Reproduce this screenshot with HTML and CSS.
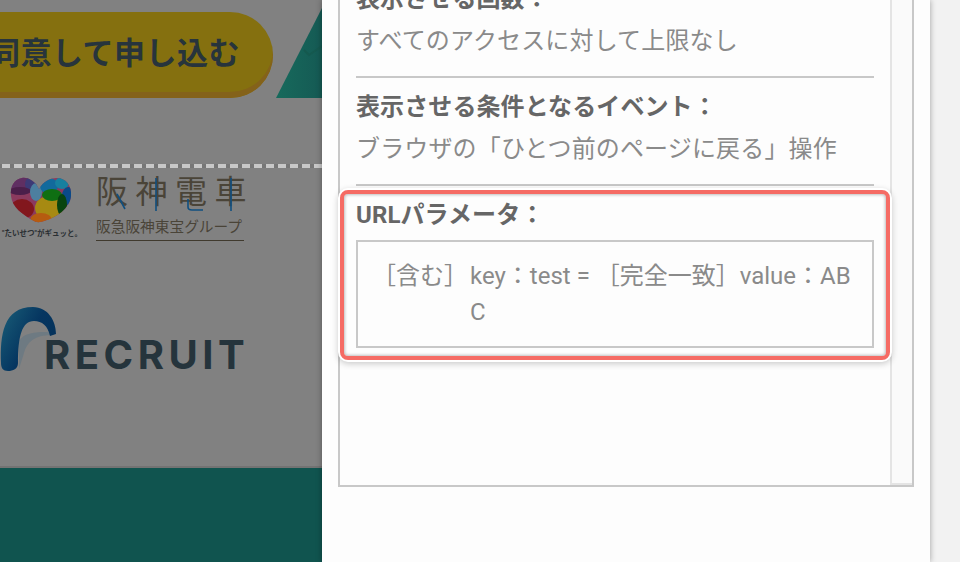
FILE: index.html
```html
<!DOCTYPE html>
<html lang="ja">
<head>
    <meta charset="UTF-8">
    <meta name="viewport" content="width=device-width, initial-scale=1.0">
    <title>ポップアップ設定</title>
    <link rel="stylesheet" href="styles.css">
</head>
<body>
    <div class="page">
        <div class="backdrop">
            <div class="cta-row">
                <div class="cta-btn">同意して申し込む</div>
                <svg class="cta-arrow" viewBox="0 0 46 90" width="46" height="90">
                    <defs>
                        <linearGradient id="arrowFill" x1="0" x2="1" y1="0" y2="0">
                            <stop offset="0" stop-color="#176a5c"/>
                            <stop offset="1" stop-color="#155a54"/>
                        </linearGradient>
                    </defs>
                    <polygon points="0,90 46,0 46,90" fill="url(#arrowFill)"/>
                    <path d="M28 42l5 5 13-9" fill="none" stroke="#15594f" stroke-width="2"/>
                </svg>
            </div>
            <div class="dash-line"></div>

            <div class="logo-hanshin">
                <div class="heart-col">
                    <svg class="heart" viewBox="12 177 62 46" width="62" height="46">
                        <defs>
                            <clipPath id="heartClip">
                                <path d="M41 189C37 181 30 177 24 178C16 179 12 187 13 196C14 207 25 215 36 221C39 223 43 222 46 221C58 218 72 208 73 196C74 186 68 178 59 178C51 178 45 182 41 189Z"/>
                            </clipPath>
                        </defs>
                        <g clip-path="url(#heartClip)">
                            <rect x="12" y="177" width="62" height="46" fill="#8b3a5e"/>
                            <ellipse cx="22" cy="184" rx="11" ry="9" fill="#5f2f62"/>
                            <ellipse cx="33" cy="184" rx="6" ry="7" fill="#3d3a76"/>
                            <ellipse cx="22" cy="191" rx="11" ry="4" fill="#4b1f4a"/>
                            <ellipse cx="24" cy="209" rx="12" ry="10" fill="#82171d"/>
                            <ellipse cx="51" cy="208" rx="14" ry="12" fill="#a78a12"/>
                            <ellipse cx="43" cy="220" rx="11" ry="7" fill="#b65c10"/>
                            <ellipse cx="38" cy="192" rx="6" ry="9" fill="#4d7f9f"/>
                            <ellipse cx="51" cy="186" rx="9" ry="8" fill="#126a9c"/>
                            <ellipse cx="64" cy="183" rx="7" ry="6" fill="#17809f"/>
                            <ellipse cx="70" cy="196" rx="6" ry="9" fill="#0a4a88"/>
                            <ellipse cx="54" cy="195" rx="10" ry="6" fill="#0f6f13"/>
                            <ellipse cx="64" cy="205" rx="5" ry="11" fill="#08440f"/>
                        </g>
                    </svg>
                    <div class="heart-caption">"たいせつ"がギュッと。</div>
                </div>
                <div class="hanshin-text">
                    <div class="hanshin-name">阪神電車</div>
                    <svg class="hanshin-accents" viewBox="96 177 150 36" width="150" height="36">
                        <path d="M117 194l8 15M156 178v33M188 199v8q0 3 4 3h11M231 178v33" fill="none" stroke="#0f4f80" stroke-width="1.6"/>
                    </svg>
                    <div class="hanshin-group">阪急阪神東宝グループ</div>
                </div>
            </div>

            <div class="logo-recruit">
                <svg class="recruit-mark" viewBox="0 306 57 65" width="57" height="65">
                    <defs>
                        <linearGradient id="archFill" x1="0" x2="1" y1="0" y2="0.6">
                            <stop offset="0" stop-color="#1a5f78"/>
                            <stop offset="0.6" stop-color="#053560"/>
                            <stop offset="1" stop-color="#05325a"/>
                        </linearGradient>
                    </defs>
                    <path d="M19 340C25 330 40 331 52 331L54 334C38 334 28 338 24 352L19 368Z" fill="#6e7a82"/>
                    <path d="M1 362C0 335 3 306 33 306C48 306 56 320 56 333L50 335C48 325 42 320 34 320C22 320 18 335 18 362C18 368 13 370 8 370C3 370 1 367 1 362Z" fill="url(#archFill)"/>
                </svg>
                <div class="recruit-name">RECRUIT</div>
            </div>

            <div class="footer-band"></div>
        </div>

        <div class="modal">
            <div class="scroll-box">
                <div class="scroll-content">
                    <div class="setting">
                        <div class="setting-label">表示させる回数：</div>
                        <div class="setting-value">すべてのアクセスに対して上限なし</div>
                    </div>
                    <div class="setting">
                        <div class="setting-label">表示させる条件となるイベント：</div>
                        <div class="setting-value">ブラウザの「ひとつ前のページに戻る」操作</div>
                    </div>
                    <div class="setting setting-highlight">
                        <div class="setting-label">URLパラメータ：</div>
                        <div class="param-box">
                            <span class="param-type">［含む］</span>
                            <span class="param-rule">key：test = ［完全一致］value：ABC</span>
                        </div>
                    </div>
                </div>
                <div class="scroll-track"></div>
            </div>
        </div>

        <div class="gutter"></div>
    </div>
</body>
</html>
```

FILE: styles.css
```css
body {
    margin: 0;
    font-family: Roboto, "Noto Sans CJK JP", sans-serif;
}
.page {
    display: flex;
    width: 960px;
    height: 562px;
    overflow: hidden;
}
.backdrop {
    display: flex;
    flex-direction: column;
    width: 322px;
    flex-shrink: 0;
    background-color: #818181;
    overflow: hidden;
}
.cta-row {
    display: flex;
    align-items: flex-end;
    gap: 3px;
    margin: 8px 0 0 -60px;
}
.cta-btn {
    width: 333px;
    height: 86px;
    padding-right: 33px;
    box-sizing: border-box;
    flex-shrink: 0;
    border-radius: 43px;
    background-color: #85700f;
    box-shadow: inset 0 -6px 0 #84621a;
    color: #27343c;
    font-size: 31px;
    font-weight: 700;
    line-height: 84px;
    letter-spacing: 0.5px;
    text-align: right;
    white-space: nowrap;
}
.cta-arrow {
    flex-shrink: 0;
}
.dash-line {
    height: 4px;
    margin-top: 66px;
    background: repeating-linear-gradient(90deg, #777 0, #777 2px, #c8c8c8 2px, #c8c8c8 10px, #777 10px, #777 12px);
    flex-shrink: 0;
}
.logo-hanshin {
    display: flex;
    gap: 12px;
    margin-top: 9px;
    flex-shrink: 0;
}
.heart-col {
    display: flex;
    flex-direction: column;
    align-items: center;
    width: 84px;
}
.heart {
    display: block;
    margin-left: -2px;
}
.heart-caption {
    margin-top: 5px;
    color: #2a2f33;
    font-size: 7.5px;
    font-weight: 700;
    line-height: 12px;
    white-space: nowrap;
}
.hanshin-text {
    position: relative;
    width: 148px;
}
.hanshin-name {
    height: 40px;
    margin-top: -5px;
    color: #4a4438;
    font-size: 32px;
    line-height: 40px;
    letter-spacing: 7.5px;
    white-space: nowrap;
}
.hanshin-accents {
    position: absolute;
    top: 0;
    left: 0;
}
.hanshin-group {
    margin-top: 4px;
    padding-bottom: 2px;
    border-bottom: 1px solid #403a2e;
    color: #4a4438;
    font-size: 14.7px;
    line-height: 22px;
    white-space: nowrap;
}
.logo-recruit {
    display: flex;
    align-items: flex-end;
    margin-top: 66px;
    flex-shrink: 0;
}
.recruit-mark {
    display: block;
    flex-shrink: 0;
}
.recruit-name {
    margin: 0 0 -3px -13px;
    color: #25343c;
    font-family: Inter, sans-serif;
    font-size: 40px;
    font-weight: 700;
    line-height: 40px;
    letter-spacing: 4.5px;
}
.footer-band {
    margin-top: auto;
    height: 94px;
    border-top: 2px solid #737373;
    background-color: #10544f;
    flex-shrink: 0;
}
.modal {
    position: relative;
    width: 608px;
    flex-shrink: 0;
    padding: 0 16px;
    box-sizing: border-box;
    background-color: #fdfdfd;
    box-shadow: 0 0 6px rgba(0, 0, 0, 0.35);
}
.scroll-box {
    display: flex;
    width: 576px;
    height: 487px;
    box-sizing: border-box;
    border: 2px solid #c8c8c8;
    border-top: none;
}
.scroll-content {
    flex: 1;
    height: 485px;
    padding: 0 16px;
    box-sizing: border-box;
}
.scroll-track {
    width: 22px;
    box-sizing: border-box;
    flex-shrink: 0;
    border-left: 2px solid #e4e4e4;
    border-bottom: 2px solid #e4e4e4;
    background-color: #fafafa;
}
.setting {
    padding: 10px 0 17px;
    border-bottom: 2px solid #c8c8c8;
}
.setting:first-child {
    margin-top: -30px;
}
.setting-label {
    position: relative;
    top: 1px;
    color: #666;
    font-size: 24px;
    font-weight: 700;
    line-height: 36px;
    letter-spacing: 0.1px;
}
.setting-value {
    margin-top: 7px;
    color: #8a8a8a;
    font-size: 24px;
    line-height: 36px;
    letter-spacing: 0.15px;
}
.setting-highlight {
    position: relative;
    padding: 0;
    margin-top: 10px;
    border-bottom: none;
}
.setting-highlight::after {
    content: "";
    position: absolute;
    top: -6px;
    left: -16px;
    right: -16px;
    bottom: -12px;
    border: 4px solid #f56b64;
    border-radius: 8px;
    box-shadow: 0 0 0 2px #fff, 0 2px 6px 2px rgba(0, 0, 0, 0.2), inset 0 0 3px 1px rgba(0, 0, 0, 0.25);
}
.param-box {
    display: flex;
    gap: 2px;
    margin-top: 8px;
    padding: 16px 14px;
    border: 2px solid #c8c8c8;
    color: #8a8a8a;
    font-size: 24px;
    line-height: 36px;
}
.param-type {
    flex-shrink: 0;
}
.param-rule {
    flex: 1;
    word-break: break-all;
}
.gutter {
    flex: 1;
    background-color: #f2f2f2;
}
```
